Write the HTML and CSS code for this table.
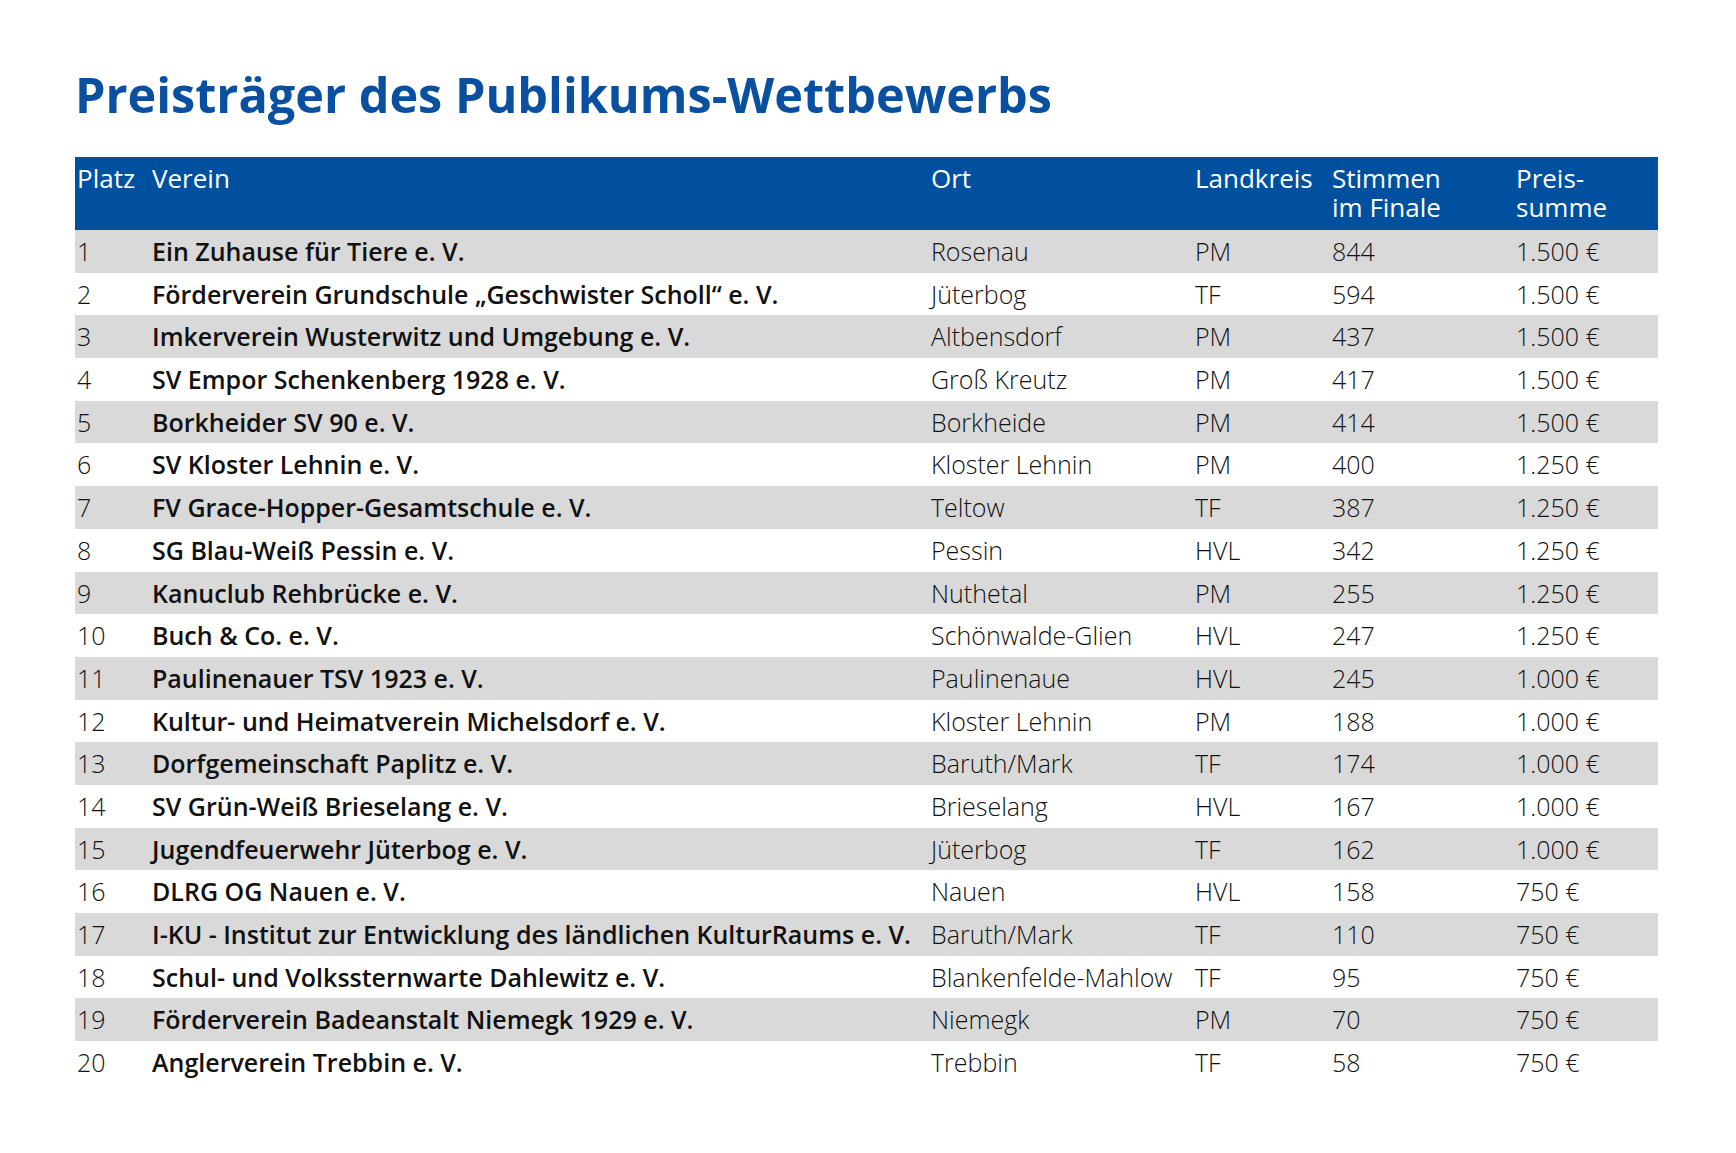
FILE: index.html
```html
<!DOCTYPE html>
<html lang="de">
<head>
<meta charset="utf-8">
<title>Preisträger des Publikums-Wettbewerbs</title>
<link rel="stylesheet" href="styles.css">
</head>
<body>
<main class="page">
  <h1 class="title">Preisträger des Publikums-Wettbewerbs</h1>
  <table class="results">
    <colgroup>
      <col class="c-platz"><col class="c-verein"><col class="c-ort"><col class="c-kreis"><col class="c-stimmen"><col class="c-preis">
    </colgroup>
    <thead>
      <tr>
        <th class="first">Platz</th><th>Verein</th><th>Ort</th><th>Landkreis</th><th>Stimmen<br>im Finale</th><th>Preis-<br>summe</th>
      </tr>
    </thead>
    <tbody>
      <tr><td class="first">1</td><td class="name">Ein Zuhause für Tiere e. V.</td><td>Rosenau</td><td>PM</td><td>844</td><td>1.500 €</td></tr>
      <tr><td class="first">2</td><td class="name">Förderverein Grundschule „Geschwister Scholl“ e. V.</td><td>Jüterbog</td><td>TF</td><td>594</td><td>1.500 €</td></tr>
      <tr><td class="first">3</td><td class="name">Imkerverein Wusterwitz und Umgebung e. V.</td><td>Altbensdorf</td><td>PM</td><td>437</td><td>1.500 €</td></tr>
      <tr><td class="first">4</td><td class="name">SV Empor Schenkenberg 1928 e. V.</td><td>Groß Kreutz</td><td>PM</td><td>417</td><td>1.500 €</td></tr>
      <tr><td class="first">5</td><td class="name">Borkheider SV 90 e. V.</td><td>Borkheide</td><td>PM</td><td>414</td><td>1.500 €</td></tr>
      <tr><td class="first">6</td><td class="name">SV Kloster Lehnin e. V.</td><td>Kloster Lehnin</td><td>PM</td><td>400</td><td>1.250 €</td></tr>
      <tr><td class="first">7</td><td class="name">FV Grace-Hopper-Gesamtschule e. V.</td><td>Teltow</td><td>TF</td><td>387</td><td>1.250 €</td></tr>
      <tr><td class="first">8</td><td class="name">SG Blau-Weiß Pessin e. V.</td><td>Pessin</td><td>HVL</td><td>342</td><td>1.250 €</td></tr>
      <tr><td class="first">9</td><td class="name">Kanuclub Rehbrücke e. V.</td><td>Nuthetal</td><td>PM</td><td>255</td><td>1.250 €</td></tr>
      <tr><td class="first">10</td><td class="name">Buch &amp; Co. e. V.</td><td>Schönwalde-Glien</td><td>HVL</td><td>247</td><td>1.250 €</td></tr>
      <tr><td class="first">11</td><td class="name">Paulinenauer TSV 1923 e. V.</td><td>Paulinenaue</td><td>HVL</td><td>245</td><td>1.000 €</td></tr>
      <tr><td class="first">12</td><td class="name">Kultur- und Heimatverein Michelsdorf e. V.</td><td>Kloster Lehnin</td><td>PM</td><td>188</td><td>1.000 €</td></tr>
      <tr><td class="first">13</td><td class="name">Dorfgemeinschaft Paplitz e. V.</td><td>Baruth/Mark</td><td>TF</td><td>174</td><td>1.000 €</td></tr>
      <tr><td class="first">14</td><td class="name">SV Grün-Weiß Brieselang e. V.</td><td>Brieselang</td><td>HVL</td><td>167</td><td>1.000 €</td></tr>
      <tr><td class="first">15</td><td class="name">Jugendfeuerwehr Jüterbog e. V.</td><td>Jüterbog</td><td>TF</td><td>162</td><td>1.000 €</td></tr>
      <tr><td class="first">16</td><td class="name">DLRG OG Nauen e. V.</td><td>Nauen</td><td>HVL</td><td>158</td><td>750 €</td></tr>
      <tr><td class="first">17</td><td class="name">I-KU - Institut zur Entwicklung des ländlichen KulturRaums e. V.</td><td>Baruth/Mark</td><td>TF</td><td>110</td><td>750 €</td></tr>
      <tr><td class="first">18</td><td class="name">Schul- und Volkssternwarte Dahlewitz e. V.</td><td>Blankenfelde-Mahlow</td><td>TF</td><td>95</td><td>750 €</td></tr>
      <tr><td class="first">19</td><td class="name">Förderverein Badeanstalt Niemegk 1929 e. V.</td><td>Niemegk</td><td>PM</td><td>70</td><td>750 €</td></tr>
      <tr><td class="first">20</td><td class="name">Anglerverein Trebbin e. V.</td><td>Trebbin</td><td>TF</td><td>58</td><td>750 €</td></tr>
    </tbody>
  </table>
</main>
</body>
</html>
```

FILE: styles.css
```css
html, body {
  margin: 0;
  padding: 0;
  background: #ffffff;
}
body {
  font-family: "Open Sans", "Noto Sans", "Liberation Sans", sans-serif;
  color: #111111;
}
.page {
  padding: 62px 78px 0 75px;
}
.title {
  margin: 0 0 31px 0;
  font-size: 48.6px;
  font-weight: 700;
  line-height: 64px;
  color: #0a50a1;
}
.results {
  width: 1583px;
  border-collapse: collapse;
  table-layout: fixed;
  font-size: 25px;
  line-height: 29px;
}
.c-platz { width: 77px; }
.c-verein { width: 779px; }
.c-ort { width: 264px; }
.c-kreis { width: 137px; }
.c-stimmen { width: 184px; }
.c-preis { width: 142px; }
.results th {
  background: #0050a0;
  color: #ffffff;
  font-size: 26px;
  font-weight: 400;
  text-align: left;
  vertical-align: top;
  padding: 7px 0 8px 0;
  height: 58px;
}
.results td {
  padding: 7px 0 6.7px 0;
  font-weight: 300;
  white-space: nowrap;
  vertical-align: top;
}
.results .first {
  padding-left: 2px;
}
.results td.name {
  font-weight: 600;
}
.results tbody tr:nth-child(odd) td {
  background: #d9d9d9;
}
```
